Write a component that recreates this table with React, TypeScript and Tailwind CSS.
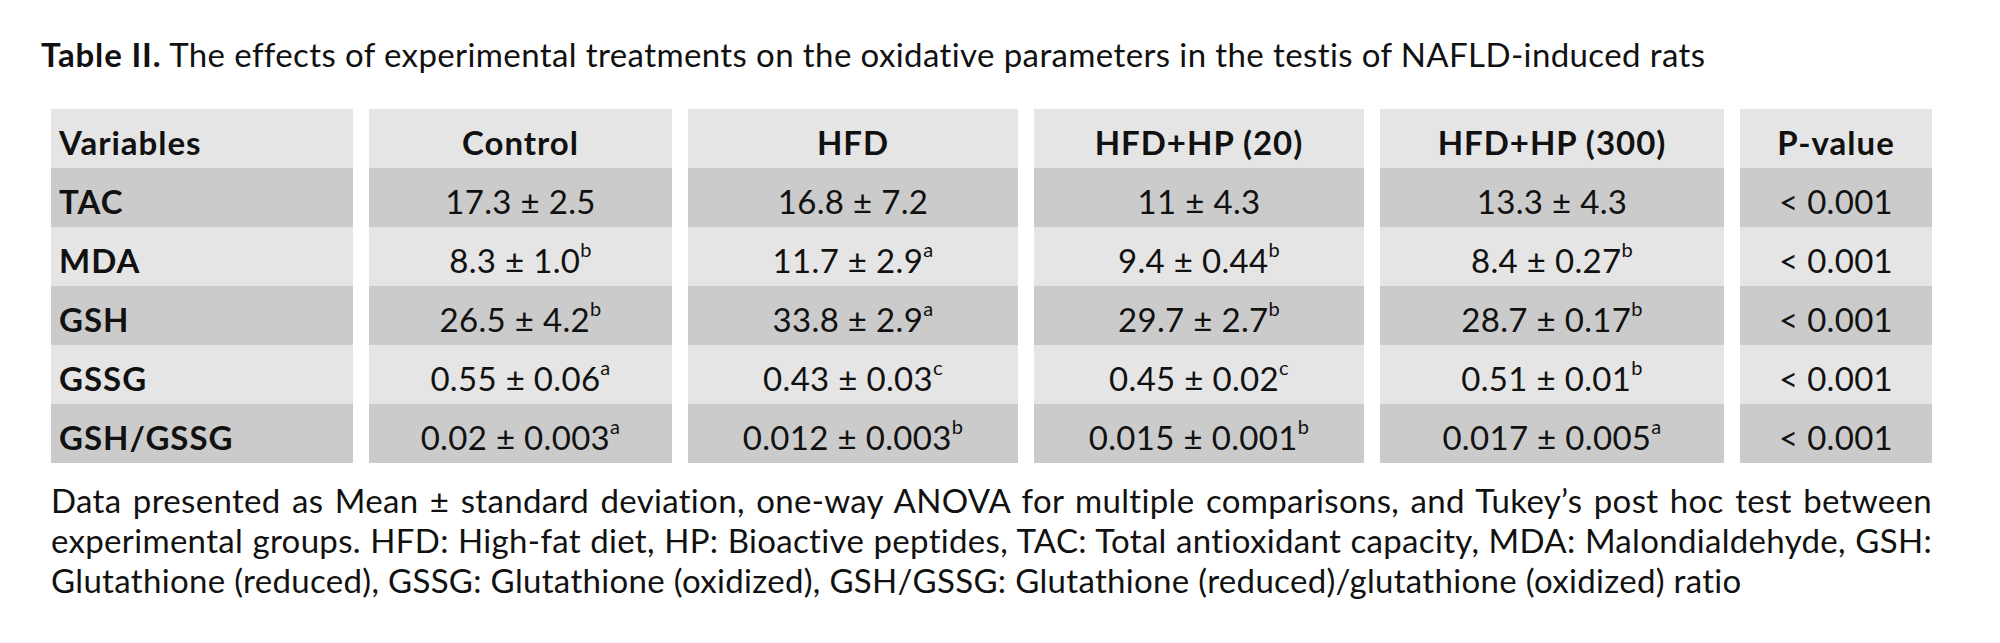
const columns = ['Variables', 'Control', 'HFD', 'HFD+HP (20)', 'HFD+HP (300)', 'P-value'];

type Cell = { v: string; sup?: string };

const rows: { label: string; cells: Cell[]; p: string }[] = [
  {
    label: 'TAC',
    cells: [{ v: '17.3 ± 2.5' }, { v: '16.8 ± 7.2' }, { v: '11 ± 4.3' }, { v: '13.3 ± 4.3' }],
    p: '< 0.001',
  },
  {
    label: 'MDA',
    cells: [
      { v: '8.3 ± 1.0', sup: 'b' },
      { v: '11.7 ± 2.9', sup: 'a' },
      { v: '9.4 ± 0.44', sup: 'b' },
      { v: '8.4 ± 0.27', sup: 'b' },
    ],
    p: '< 0.001',
  },
  {
    label: 'GSH',
    cells: [
      { v: '26.5 ± 4.2', sup: 'b' },
      { v: '33.8 ± 2.9', sup: 'a' },
      { v: '29.7 ± 2.7', sup: 'b' },
      { v: '28.7 ± 0.17', sup: 'b' },
    ],
    p: '< 0.001',
  },
  {
    label: 'GSSG',
    cells: [
      { v: '0.55 ± 0.06', sup: 'a' },
      { v: '0.43 ± 0.03', sup: 'c' },
      { v: '0.45 ± 0.02', sup: 'c' },
      { v: '0.51 ± 0.01', sup: 'b' },
    ],
    p: '< 0.001',
  },
  {
    label: 'GSH/GSSG',
    cells: [
      { v: '0.02 ± 0.003', sup: 'a' },
      { v: '0.012 ± 0.003', sup: 'b' },
      { v: '0.015 ± 0.001', sup: 'b' },
      { v: '0.017 ± 0.005', sup: 'a' },
    ],
    p: '< 0.001',
  },
];

export default function App() {
  return (
    <div className="min-h-screen bg-white text-[#111] font-['Lato',sans-serif] tracking-[0.02em]">
      <div className="pt-[34px] pl-[41px]">
        <h1 className="text-[33px] leading-[40px] tracking-[0.012em]">
          <span className="font-bold tracking-[0.025em]">Table II.</span> The effects of experimental treatments on the
          oxidative parameters in the testis of NAFLD-induced rats
        </h1>
      </div>

      {/* table */}
      <div className="mt-[35px] ml-[51px] grid grid-cols-[302px_303px_330px_330px_344px_192px] gap-x-4 text-[33px]">
        {columns.map((c, i) => (
          <div
            key={c}
            className={`h-[59px] pt-2 flex items-center bg-[#e5e5e5] font-bold tracking-[0.03em] ${i === 0 ? 'pl-2' : 'justify-center'}`}
          >
            {c}
          </div>
        ))}
        {rows.map((r, ri) => {
          const bg = ri % 2 === 0 ? 'bg-[#cbcbcb]' : 'bg-[#e5e5e5]';
          return [
            <div key={r.label} className={`h-[59px] pt-2 pl-2 flex items-center font-bold tracking-[0.03em] ${bg}`}>
              {r.label}
            </div>,
            ...r.cells.map((c, ci) => (
              <div key={r.label + ci} className={`h-[59px] pt-2 flex items-center justify-center ${bg}`}>
                <span>
                  {c.v}
                  {c.sup && <sup className="text-[20px] -top-[0.8em]">{c.sup}</sup>}
                </span>
              </div>
            )),
            <div key={r.label + 'p'} className={`h-[59px] pt-2 flex items-center justify-center ${bg}`}>
              {r.p}
            </div>,
          ];
        })}
      </div>

      {/* footnote */}
      <p className="mt-[17px] ml-[51px] w-[1881px] text-[33px] leading-[40px] text-justify">
        Data presented as Mean ± standard deviation, one-way ANOVA for multiple comparisons, and Tukey’s post hoc test
        between experimental groups. HFD: High-fat diet, HP: Bioactive peptides, TAC: Total antioxidant capacity, MDA:
        Malondialdehyde, GSH: Glutathione (reduced), GSSG: Glutathione (oxidized), GSH/GSSG: Glutathione
        (reduced)/glutathione (oxidized) ratio
      </p>
    </div>
  );
}
